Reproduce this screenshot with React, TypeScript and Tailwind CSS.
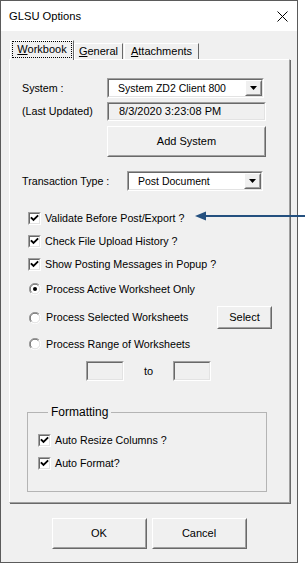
import React from 'react';

const Sunken: React.FC<{ className?: string; fill?: string; children?: React.ReactNode }> = ({ className = '', fill = 'bg-white', children }) => (
  <div className={`border border-t-[#a0a0a0] border-l-[#a0a0a0] border-b-white border-r-white ${className}`}>
    <div className={`h-full w-full border border-t-[#696969] border-l-[#696969] border-b-[#e3e3e3] border-r-[#e3e3e3] ${fill}`}>{children}</div>
  </div>
);

const Raised: React.FC<{ className?: string; children?: React.ReactNode }> = ({ className = '', children }) => (
  <div className={`border border-t-white border-l-white border-b-[#696969] border-r-[#696969] bg-[#f0f0f0] ${className}`}>
    <div className="h-full w-full border border-t-[#f0f0f0] border-l-[#f0f0f0] border-b-[#a0a0a0] border-r-[#a0a0a0] flex items-center justify-center">
      {children}
    </div>
  </div>
);

const Combo: React.FC<{ value: string; className?: string }> = ({ value, className = '' }) => (
  <Sunken className={className}>
    <div className="flex h-full items-center">
      <span className="flex-1 pl-[9px] text-[10.5px] leading-none">{value}</span>
      <Raised className="w-[17px] h-[16px]">
        <svg width="7" height="4" viewBox="0 0 7 4">
          <polygon points="0,0 7,0 3.5,4" fill="#000" />
        </svg>
      </Raised>
    </div>
  </Sunken>
);

const Check: React.FC<{ label: string }> = ({ label }) => (
  <div className="flex items-center h-[13px] gap-[4px]">
    <Sunken className="w-[13px] h-[13px]">
      <svg width="9" height="9" viewBox="0 0 9 9" className="block">
        <polyline points="1.5,4 3.5,6 7.5,2" fill="none" stroke="#000" strokeWidth="1.8" strokeLinecap="square" />
      </svg>
    </Sunken>
    <span className="text-[10.7px] leading-none">{label}</span>
  </div>
);

const Radio: React.FC<{ label: string; checked?: boolean }> = ({ label, checked }) => (
  <div className="flex items-center h-[12px] gap-[5px]">
    <svg width="12" height="12" viewBox="0 0 12 12" className="block shrink-0">
      <circle cx="6" cy="6" r="4.5" fill="#fff" />
      <path d="M1.9 10.1 A5.8 5.8 0 0 1 10.1 1.9" fill="none" stroke="#a0a0a0" strokeWidth="1" />
      <path d="M2.6 9.4 A4.8 4.8 0 0 1 9.4 2.6" fill="none" stroke="#696969" strokeWidth="1" />
      <path d="M10.1 1.9 A5.8 5.8 0 0 1 1.9 10.1" fill="none" stroke="#fff" strokeWidth="1" />
      <path d="M9.4 2.6 A4.8 4.8 0 0 1 2.6 9.4" fill="none" stroke="#e3e3e3" strokeWidth="1" />
      {checked && <circle cx="6" cy="6" r="2" fill="#000" />}
    </svg>
    <span className="text-[10.7px] leading-none">{label}</span>
  </div>
);

export default function App() {
  return (
    <div className="relative w-[305px] h-[564px] bg-white font-['Liberation_Sans',Arial,sans-serif] text-black">
      <div className="w-[298px] h-[563px] border border-[#5b5b5b] flex flex-col">
        <div className="h-[30px] bg-white flex items-center justify-between pl-[8px] pr-[9px]">
          <span className="text-[11.2px]">GLSU Options</span>
          <svg width="11" height="11" viewBox="0 0 11 11">
            <path d="M0.5 0.5 L10.5 10.5 M10.5 0.5 L0.5 10.5" stroke="#000" strokeWidth="1" />
          </svg>
        </div>
        <div className="flex-1 bg-[#f0f0f0] pt-[9px]">
          <div className="ml-[8px] w-[281px]">
            <div className="flex items-end h-[19px] pl-[1px]">
              <div className="relative z-10 -mb-px h-[20px] w-[64px] bg-[#f0f0f0] border-t border-l border-r border-t-white border-l-white border-r-[#696969] pl-[1px]">
                <div className="h-[17px] w-[60px] border border-dotted border-black flex items-center justify-center text-[11px] leading-none">
                  <span><span className="underline">W</span>orkbook</span>
                </div>
              </div>
              <div className="h-[16px] w-[49px] border-t border-l border-r border-t-white border-l-white border-r-[#696969] flex items-center justify-center text-[11px] leading-none">
                <span><span className="underline">G</span>eneral</span>
              </div>
              <div className="ml-[1px] h-[16px] w-[75px] border-t border-l border-r border-t-white border-l-white border-r-[#696969] flex items-center justify-center text-[11px] leading-none">
                <span><span className="underline">A</span>ttachments</span>
              </div>
            </div>
            <div className="h-[444px] border-t border-l border-r border-b border-t-white border-l-white border-r-[#a0a0a0] border-b-[#a0a0a0] shadow-[1px_1px_0_#696969] pt-[18px] pl-[12px] text-[10.7px]">
              <div className="flex items-center">
                <span className="w-[85px]">System :</span>
                <Combo value="System ZD2 Client 800" className="w-[157px] h-[20px]" />
              </div>
              <div className="flex items-center mt-[4px]">
                <span className="w-[85px]">(Last Updated)</span>
                <Sunken className="w-[159px] h-[19px]" fill="bg-[#f0f0f0]">
                  <div className="h-full flex items-center pl-[10px] text-[11px] leading-none">8/3/2020 3:23:08 PM</div>
                </Sunken>
              </div>
              <Raised className="mt-[5px] ml-[85px] w-[159px] h-[31px]">
                <span className="text-[11px]">Add System</span>
              </Raised>
              <div className="flex items-center mt-[14px]">
                <span className="w-[105px]">Transaction Type :</span>
                <Combo value="Post Document" className="w-[136px] h-[20px]" />
              </div>
              <div className="mt-[21px] ml-[6px] flex flex-col gap-[10px]">
                <Check label="Validate Before Post/Export ?" />
                <Check label="Check File Upload History ?" />
                <Check label="Show Posting Messages in Popup ?" />
              </div>
              <div className="mt-[12px] ml-[7px]">
                <Radio label="Process Active Worksheet Only" checked />
              </div>
              <div className="mt-[11px] ml-[7px] h-[23px] flex items-center">
                <div className="w-[188px]">
                  <Radio label="Process Selected Worksheets" />
                </div>
                <Raised className="w-[55px] h-[23px]">
                  <span className="text-[11px]">Select</span>
                </Raised>
              </div>
              <div className="mt-[9px] ml-[7px]">
                <Radio label="Process Range of Worksheets" />
              </div>
              <div className="mt-[11px] ml-[64px] flex items-center h-[20px]">
                <Sunken className="w-[38px] h-[20px]" fill="bg-[#f0f0f0]" />
                <span className="w-[49px] text-center text-[11px]">to</span>
                <Sunken className="w-[38px] h-[20px]" fill="bg-[#f0f0f0]" />
              </div>
              <fieldset className="mt-[25px] ml-[5px] w-[240px] h-[86px] border border-[#b4b4b4] pl-[10px]">
                <legend className="ml-[10px] px-[3px] text-[12px] leading-[13px]">Formatting</legend>
                <div className="mt-[15px] flex flex-col gap-[10px]">
                  <Check label="Auto Resize Columns ?" />
                  <Check label="Auto Format?" />
                </div>
              </fieldset>
            </div>
          </div>
          <div className="mt-[15px] flex justify-center gap-[5px]">
            <Raised className="w-[95px] h-[31px]">
              <span className="text-[11px]">OK</span>
            </Raised>
            <Raised className="w-[95px] h-[31px]">
              <span className="text-[11px]">Cancel</span>
            </Raised>
          </div>
        </div>
      </div>
      <svg className="absolute left-[195px] top-[211px]" width="110" height="10" viewBox="0 0 110 10">
        <line x1="9" y1="5" x2="110" y2="5" stroke="#24507f" strokeWidth="2" />
        <polygon points="0,5 11,0.5 11,9.5" fill="#24507f" />
      </svg>
    </div>
  );
}
